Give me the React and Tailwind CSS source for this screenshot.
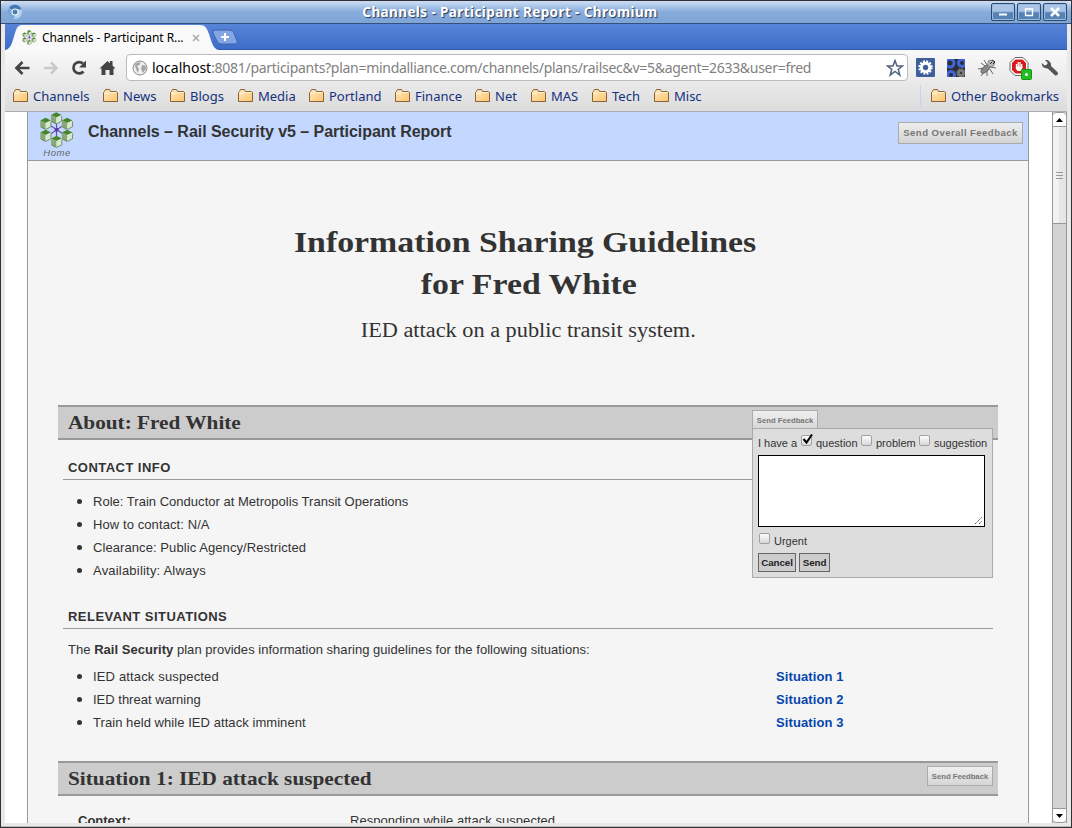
const Folder = () => (
  <svg width="16" height="14" viewBox="0 0 16 14" className="shrink-0">
    <defs>
      <linearGradient id="fg" x1="0" y1="0" x2="1" y2="1">
        <stop offset="0" stopColor="#ffe9c0" />
        <stop offset="1" stopColor="#fcc56c" />
      </linearGradient>
    </defs>
    <path d="M.5 12.500V3.500L1.500 2.500 2.500 .5H6.500L7.500 2.500H13.500L14.500 3.500V12.500Z" fill="url(#fg)" stroke="#8a6236" />
    <path d="M1.500 4.500H6L7 3.500H13" fill="none" stroke="#fff3dc" />
  </svg>
);

const Bookmark = ({ children, gap, w }) => (
  <div className={"flex items-center gap-[4px] h-[20px] " + gap}>
    <Folder />
    <span className={"whitespace-nowrap text-[13px] leading-[20px] text-[#15317e] " + w}>{children}</span>
  </div>
);

const cube = (x, y, k) => (
  <g key={k} transform={`translate(${x} ${y})`}>
    <path d="M0 3 5.500 .3 11 3 5.500 5.700Z" fill="#47842a" />
    <path d="M0 3 5.500 5.700V12.200L0 9.500Z" fill="#86a873" />
    <path d="M11 3 5.500 5.700V12.200L11 9.500Z" fill="#d9e8cd" />
    <path d="M.5 9.800 5.500 12.200 11 9.500V4" fill="none" stroke="#4b6a3e" strokeWidth=".7" />
  </g>
);

const Logo = ({ size }) => (
  <svg width={size} height={size} viewBox="0 0 36 37" className="shrink-0">
    <g stroke="#6a4fb0" strokeWidth="1.200">
      <path d="M17.500 12V25M12 14.500 23.500 22M23.500 14.500 12 22" />
    </g>
    <circle cx="17.600" cy="18.300" r="2" fill="#5a3aa0" />
    {[[11.800, 0], [.8, 5.700], [23, 5.700], [.8, 18], [23, 18], [12, 24.200]].map((p, i) => cube(p[0], p[1], i))}
  </svg>
);

const WinButton = ({ children }) => (
  <div className="flex h-[18px] w-[24px] items-center justify-center rounded-[2px] border border-[#2c4a6b] bg-linear-to-b from-[#a9c4e6] from-45% to-[#5583b5] to-55% shadow-[inset_0_0_0_1px_#9dbce0]">
    <svg width="12" height="12" viewBox="0 0 12 12" fill="none" stroke="#fff">{children}</svg>
  </div>
);

const Check = ({ on, className }) => (
  <span className={"relative block h-[11px] w-[11px] shrink-0 rounded-[2px] border border-[#a0a0a0] bg-linear-to-b from-[#fdfdfd] to-[#d8d8d8] " + className}>
    {on && (
      <svg className="absolute -left-px -top-[3px]" width="14" height="13" viewBox="0 0 14 13">
        <path d="M2.500 6 5.500 9.500 11 1.500" fill="none" stroke="#000" strokeWidth="2" />
      </svg>
    )}
  </span>
);

const Section = ({ title, children }) => (
  <div className="relative flex h-[35px] w-[940px] items-center border-y-2 border-[#999] bg-[#ccc] pl-[10px]">
    <h2 className="mt-px origin-left scale-x-[1.09] font-['Liberation_Serif',serif] text-[19.500px] leading-[30px] font-bold whitespace-nowrap text-[#333]">{title}</h2>
    {children}
  </div>
);

const Sub = ({ children }) => (
  <h3 className="ml-[5px] h-[23px] w-[930px] border-b border-[#999] pt-px pl-[5px] text-[13px] leading-[20px] font-bold tracking-[0.460px] text-[#333]">{children}</h3>
);

const Item = ({ children, link, track = "tracking-[0.060px]" }) => (
  <li className="flex h-[23px] items-center pl-[19px]">
    <span className="h-[5px] w-[5px] rounded-full bg-[#333]" />
    <span className={"ml-[11px] w-[683px] whitespace-nowrap " + track}>{children}</span>
    {link && <a className="font-bold tracking-[0.100px] text-[#0645ad]">{link}</a>}
  </li>
);

const SmallButton = ({ children }) => (
  <div className="flex h-[20px] w-[66px] items-center justify-center border border-[#aaa] bg-linear-to-b from-[#f0f0f0] to-[#d6d6d6] pt-px text-[7.700px] font-bold whitespace-nowrap text-[#777]">{children}</div>
);

export default function App() {
  return (
    <div className="flex h-[828px] w-[1072px] flex-col overflow-hidden border border-[#303036] bg-[#ebe9e8] font-['Liberation_Sans',sans-serif] text-[#333]">
      <header className="relative flex h-[23px] shrink-0 items-center justify-between rounded-t-[5px] border-b border-[#34507c] bg-linear-to-b from-[#c7daf2] from-5% via-[#86abdb] via-50% to-[#7fa5d8] pr-[4px] pl-[6px]">
        <svg width="16" height="16" viewBox="0 0 16 16">
          <circle cx="8" cy="8" r="7" fill="#b5d1ee" />
          <path d="M8 8 2 4A7 7 0 0 1 14.500 5.500L8 5Z" fill="#4277b0" />
          <path d="M2 4A7 7 0 0 0 7 15L8 11Z" fill="#78a6d5" />
          <circle cx="8" cy="8" r="3.500" fill="#fff" />
          <circle cx="8" cy="8" r="2.500" fill="#4d7eb8" />
        </svg>
        <h1 className="pl-[6px] font-['Noto_Sans',sans-serif] text-[13.500px] leading-[20px] font-bold tracking-[0.400px] whitespace-nowrap text-white [text-shadow:1px_1px_1px_#23395c]">Channels - Participant Report - Chromium</h1>
        <div className="flex gap-[2px]">
          <WinButton><path d="M2 8.500H10" strokeWidth="2" /></WinButton>
          <WinButton><path d="M2.500 3H9.500V9.500H2.500Z" strokeWidth="1.300" /></WinButton>
          <WinButton><path d="M2 2 10 10M10 2 2 10" strokeWidth="2.500" /></WinButton>
        </div>
      </header>

      <div className="ml-[4px] flex h-[26px] w-[1062px] shrink-0 items-end border-b border-[#2f5aab] bg-linear-to-b from-[#5784d8] to-[#3d6dc9]">
        <div className="relative -mb-px flex h-[25px] w-[216px] items-center">
          <svg className="absolute inset-0" width="246" height="25" viewBox="0 0 246 25">
            <path d="M0 25C6 24 7 18 10 8 12 2 13 0 18 0H195C201 0 202 4 204 9 207 18 208 24 214 25Z" fill="#f9f9f9" />
            <path d="M210 5H224Q228 5 229 8L232 16Q233 19 229 19H216Q213 19 212 16L208 8Q207 5 210 5Z" fill="#83a5e3" stroke="#3c64b0" />
            <path d="M220 8V16M216 12H224" stroke="#fff" strokeWidth="2" />
          </svg>
          <div className="relative flex items-center pl-[17px]">
            <Logo size={15} />
            <span className="w-[152px] pl-[5px] font-['Noto_Sans',sans-serif] text-[12px] tracking-[-0.080px] whitespace-nowrap text-black">Channels - Participant R...</span>
            <svg className="ml-[3px]" width="8" height="8" viewBox="0 0 8 8"><path d="M1 1 7 7M7 1 1 7" stroke="#aaa" strokeWidth="1.500" /></svg>
          </div>
        </div>
      </div>

      <nav className="ml-[4px] flex h-[62px] w-[1062px] shrink-0 flex-col border-b border-[#a8adb5] bg-linear-to-b from-[#f9f9f9] to-[#dcdcdc] font-['Noto_Sans',sans-serif]">
        <div className="flex h-[34px] shrink-0 items-center pt-[1px] pl-[9px]">
          <svg width="104" height="18" viewBox="0 0 104 18" fill="none">
            <path d="M15.500 9H3M8.500 3 2.500 9 8.500 15" stroke="#444" strokeWidth="2.700" />
            <path d="M30 9H42M37 3.500 42.500 9 37 14.500" stroke="#c9c9c9" strokeWidth="2.500" />
            <path d="M69.500 12.500A5.700 5.700 0 1 1 69 4.500" stroke="#444" strokeWidth="2.700" />
            <path d="M72 1.500V8.500H65Z" fill="#444" />
            <path d="M85.500 9.500 93.500 2 96 4.300V2H98.500V6.500L101.500 9.500H99.500V16H95.500V11H91.500V16H87.500V9.500Z" fill="#444" />
          </svg>
          <div className="ml-[8px] flex h-[27px] w-[782px] items-center rounded-[4px] border border-[#bbb] bg-white pl-[5px]">
            <svg width="16" height="16" viewBox="0 0 16 16">
              <circle cx="8" cy="8" r="7" fill="#f1f1f1" stroke="#888" />
              <path d="M2.500 5Q5 1.500 8.500 2.500L7.500 5 5 6 7 9 6 13 4.500 10ZM10 5 13.500 5.500 14 9 11 13 9 9Z" fill="#a5a5a5" />
            </svg>
            <span className="ml-[4px] w-[734px] text-[14px] leading-[22px] tracking-[-0.288px] whitespace-nowrap text-[#808080]"><span className="tracking-normal text-black">localhost</span>:8081/participants?plan=mindalliance.com/channels/plans/railsec&amp;v=5&amp;agent=2633&amp;user=fred</span>
            <svg width="18" height="18" viewBox="0 0 18 18"><path d="M9 1.500 11 7H16.500L12.200 10.300 13.800 16 9 12.500 4.200 16 5.800 10.300 1.500 7H7Z" fill="#fff" stroke="#52627f" strokeWidth="1.500" /></svg>
          </div>
          <div className="ml-[8px] flex items-center gap-[12px]">
            <svg width="19" height="19" viewBox="0 0 19 19">
              <rect width="19" height="19" rx="1" fill="#3f5f9b" />
              <circle cx="9.500" cy="9.500" r="6.200" fill="none" stroke="#fff" strokeWidth="2" strokeDasharray="1.900 1.345" />
              <circle cx="9.500" cy="9.500" r="4.200" fill="none" stroke="#fff" strokeWidth="3" />
            </svg>
            <svg width="18" height="18" viewBox="0 0 18 18">
              <rect width="18" height="18" fill="#2a2d38" />
              <g fill="none">
                <circle cx="3" cy="4" r="4" stroke="#4166d8" strokeWidth="3" />
                <circle cx="15" cy="4" r="3.500" stroke="#4166d8" strokeWidth="3" />
                <circle cx="4" cy="16" r="3.500" stroke="#4166d8" strokeWidth="3" />
                <circle cx="14" cy="14" r="2.500" stroke="#777" strokeWidth="3" />
                <circle cx="14" cy="14" r="4.300" stroke="#777" strokeDasharray="1.800 1.577" />
              </g>
            </svg>
            <svg width="20" height="20" viewBox="0 0 20 20" fill="none" stroke="#666">
              <path d="M7 10 1 11M8 8 4 5M10 7 7 2M7 14 4 18M10 13V18M13 11 16 16M13 9 19 10M12 6V2M14 7 18 4" />
              <ellipse cx="8.500" cy="11" rx="5.500" ry="2.500" transform="rotate(-43 8.500 11)" fill="#888" />
              <circle cx="14" cy="5.500" r="3.300" fill="#bbb" stroke="#888" /><path d="M15 2 18 4 16 6M13 6 15 4" stroke="#222" />
            </svg>
            <svg width="23" height="24" viewBox="0 0 23 24">
              <path d="M6 1.500H14L19 6.500V14.500L14 19.500H6L1 14.500V6.500Z" fill="#fff" stroke="#666" />
              <path d="M6.500 3.500H13.500L17 7V14L13.500 17.500H6.500L3 14V7Z" fill="#d91a1a" />
              <path d="M7.500 11V8M9.200 11V6M11 11V6M12.700 12V8" stroke="#fff" strokeWidth="1.300" /><path d="M6.800 10.500V12.500L8.500 15H11.800L13.400 12V10.500Z" fill="#fff" />
              <rect x="12.500" y="13.500" width="10" height="10" rx="1" fill="#22bd22" stroke="#119611" /><circle cx="17.500" cy="18.500" r="1.500" fill="#fff" />
            </svg>
            <svg width="18" height="18" viewBox="0 0 18 18" className="-ml-[3px]">
              <path d="M7 7 15 14.500" stroke="#555" strokeWidth="4" strokeLinecap="round" />
              <path d="M.8 4 3.500 6.500 6.500 5.500 6.500 3.500 4 1.200A5 5 0 0 1 10 7 5 5 0 0 1 .8 4Z" fill="#555" />
            </svg>
          </div>
        </div>
        <div className="flex h-[24px] items-center pr-[4px] pl-[8px]">
          <Bookmark w="w-[58px]" gap="">Channels</Bookmark>
          <Bookmark w="w-[34px]" gap="ml-[12px]">News</Bookmark>
          <Bookmark w="w-[36px]" gap="ml-[13px]">Blogs</Bookmark>
          <Bookmark w="w-[38px]" gap="ml-[12px]">Media</Bookmark>
          <Bookmark w="w-[54px]" gap="ml-[13px]">Portland</Bookmark>
          <Bookmark w="w-[47px]" gap="ml-[12px]">Finance</Bookmark>
          <Bookmark w="w-[23px]" gap="ml-[13px]">Net</Bookmark>
          <Bookmark w="w-[29px]" gap="ml-[13px]">MAS</Bookmark>
          <Bookmark w="w-[29px]" gap="ml-[12px]">Tech</Bookmark>
          <Bookmark w="w-[28px]" gap="ml-[13px]">Misc</Bookmark>
          <div className="ml-auto h-[22px] w-px bg-[#c3d3f5]" />
          <Bookmark w="w-[112px]" gap="ml-[10px]">Other Bookmarks</Bookmark>
        </div>
      </nav>

      <div className="ml-[4px] flex h-[711px] w-[1062px] shrink-0 overflow-hidden bg-white">
        <main className="ml-[22px] h-[711px] w-[1002px] shrink-0 overflow-hidden border-x border-[#999] bg-[#f5f5f5]">
          <div className="flex h-[49px] border-b border-[#999] bg-[#c4d8ff]">
            <div className="flex w-[60px] flex-col items-center pr-[2px]">
              <Logo size={36} />
              <span className="text-[9.500px] leading-[10px] tracking-[0.500px] text-[#666] italic">Home</span>
            </div>
            <h1 className="w-[810px] pt-[10px] text-[16px] leading-[20px] font-bold tracking-[-0.040px] whitespace-nowrap">Channels – Rail Security v5 – Participant Report</h1>
            <div className="mt-[10px] flex h-[22px] w-[125px] items-center justify-center border border-[#aaa] bg-linear-to-b from-[#eee] to-[#d4d4d4] pt-px text-[9.600px] font-bold tracking-[0.420px] whitespace-nowrap text-[#777]">Send Overall Feedback</div>
          </div>

          <div className="flex h-[244px] w-[1000px] flex-col items-center pt-[60px] font-['Liberation_Serif',serif] whitespace-nowrap">
            <h1 className="ml-[2px] flex flex-col items-center text-[30px] leading-[42px] font-bold">
              <span className="mr-[7px] scale-x-[1.127]">Information Sharing Guidelines</span>
              <span className="scale-x-[1.127]">for Fred White</span>
            </h1>
            <p className="mt-[10px] scale-x-[1.115] text-[20px] leading-[30px]">IED attack on a public transit system.</p>
          </div>

          <div className="ml-[30px] text-[13px]">
            <Section title="About: Fred White">
              <div className="absolute top-[3px] left-[694px] z-10">
                <SmallButton>Send Feedback</SmallButton>
                <div className="-mt-[2px] h-[150px] w-[241px] border border-[#aaa] bg-[#ddd] pl-[5px] text-[11px] leading-[14px] text-[#333]">
                  <div className="flex h-[26px] items-center pt-px whitespace-nowrap">
                    <span className="w-[43px]">I have a</span>
                    <Check on className="-mt-[5px]" /><span className="ml-[4px] w-[45px]">question</span>
                    <Check className="-mt-[5px]" /><span className="ml-[4px] w-[43px]">problem</span>
                    <Check className="-mt-[5px]" /><span className="ml-[4px]">suggestion</span>
                  </div>
                  <div className="flex h-[72px] w-[227px] items-end justify-end border border-black bg-white">
                    <svg width="10" height="10" viewBox="0 0 10 10"><path d="M1 8 8 1M5 8 8 5" stroke="#555" strokeDasharray="1.500 .5" /></svg>
                  </div>
                  <div className="flex h-[26px] items-center pt-px pl-px"><Check className="-mt-[5px]" /><span className="ml-[4px]">Urgent</span></div>
                  <div className="flex gap-[3px] text-[9.800px] leading-[18px] font-bold tracking-[-0.100px] text-[#222]">
                    <div className="h-[19px] w-[38px] border border-[#666] bg-[#ccc] text-center">Cancel</div>
                    <div className="h-[19px] w-[31px] border border-[#666] bg-[#ccc] text-center">Send</div>
                  </div>
                </div>
              </div>
            </Section>
            <div className="mt-[17px]"><Sub>CONTACT INFO</Sub></div>
            <ul className="mt-[10px]">
              <Item track="tracking-[0.020px]">Role: Train Conductor at Metropolis Transit Operations</Item>
              <Item track="tracking-[0.090px]">How to contact: N/A</Item>
              <Item track="tracking-[0.080px]">Clearance: Public Agency/Restricted</Item>
              <Item track="tracking-[0.200px]">Availability: Always</Item>
            </ul>
            <div className="mt-[24px]"><Sub>RELEVANT SITUATIONS</Sub></div>
            <p className="mt-[11px] pl-[10px] leading-[20px] tracking-[0.030px]">The <b>Rail Security</b> plan provides information sharing guidelines for the following situations:</p>
            <ul className="mt-[5px]">
              <Item link="Situation 1" track="tracking-[0.150px]">IED attack suspected</Item>
              <Item link="Situation 2" track="tracking-normal">IED threat warning</Item>
              <Item link="Situation 3">Train held while IED attack imminent</Item>
            </ul>
            <div className="mt-[27px]">
              <Section title="Situation 1: IED attack suspected">
                <div className="absolute top-[3px] left-[869px]"><SmallButton>Send Feedback</SmallButton></div>
              </Section>
            </div>
            <div className="mt-[15px] flex pl-[20px] leading-[20px]">
              <b className="w-[272px]">Context:</b>
              <span className="tracking-[0.040px]">Responding while attack suspected.</span>
            </div>
          </div>
        </main>
        <div className="ml-auto flex h-[711px] w-[15px] flex-col border-x border-[#999] bg-[#d3d3d3]">
          <div className="flex h-[15px] items-center justify-center rounded-t-[4px] border-y border-[#999] bg-white"><svg width="7" height="4"><path d="M3.500 0 7 4H0Z" /></svg></div>
          <div className="flex h-[97px] flex-col items-center justify-center gap-[2px] border-b border-[#999] bg-linear-to-r from-[#f2f2f2] from-50% to-[#e6e6e6] to-50%">
            <i className="h-px w-[7px] bg-[#999]" /><i className="h-px w-[7px] bg-[#999]" /><i className="h-px w-[7px] bg-[#999]" />
          </div>
          <div className="mt-auto flex h-[15px] items-center justify-center rounded-b-[4px] border-y border-[#999] bg-white"><svg width="7" height="4"><path d="M0 0H7L3.500 4Z" /></svg></div>
        </div>
      </div>
      <div className="h-[4px] shrink-0 border-b border-[#bbb] bg-[#ebe9e8]" />
    </div>
  );
}
